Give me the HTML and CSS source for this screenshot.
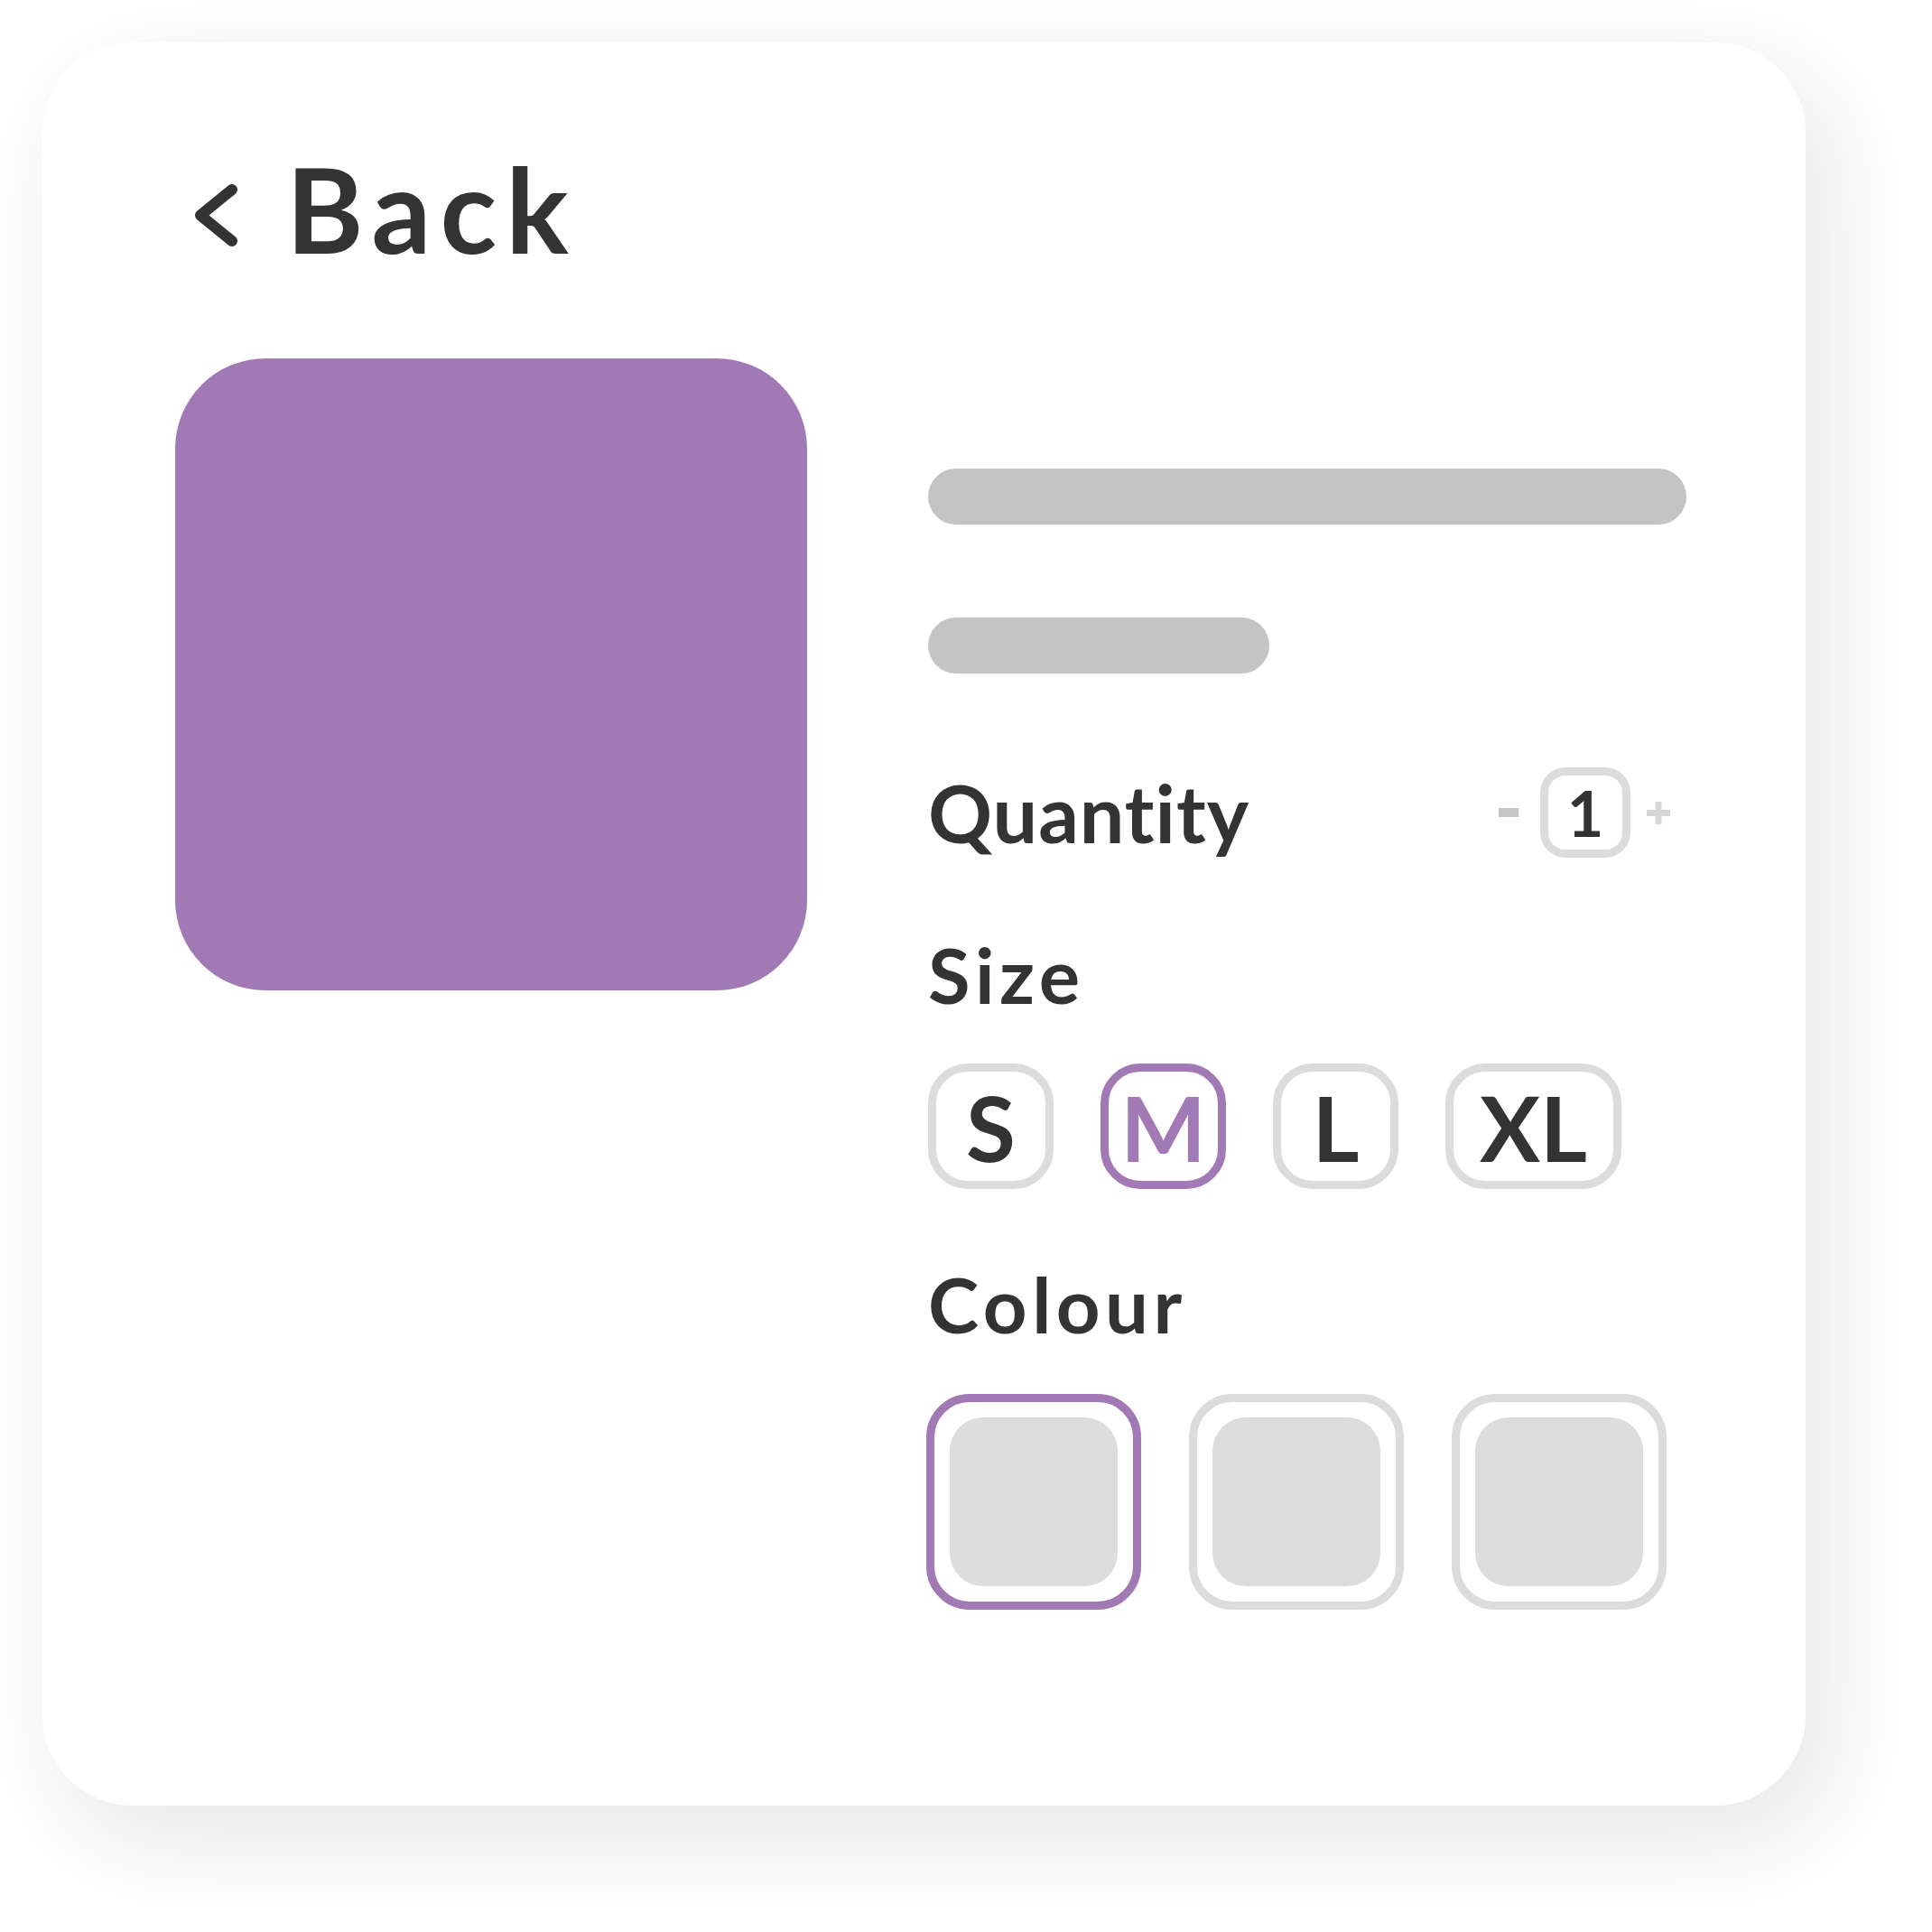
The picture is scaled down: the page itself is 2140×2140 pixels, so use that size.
FILE: index.html
```html
<!DOCTYPE html>
<html lang="en">

<head>
    <meta charset="UTF-8">
    <meta name="viewport" content="width=device-width, initial-scale=1.0">
    <title>Product</title>
    <link rel="stylesheet" href="styles.css">
</head>

<body>
    <div class="card">
        <a class="back" href="#">
            <svg class="back-icon" width="47" height="69" viewBox="0 0 47 69">
                <polyline points="41,6 6,34.5 41,63" fill="none" stroke="#333" stroke-width="12"
                    stroke-linecap="round" stroke-linejoin="round" />
            </svg>
            <span>Back</span>
        </a>

        <div class="product">
            <div class="product-image"></div>

            <div class="details">
                <div class="bar bar-title"></div>
                <div class="bar bar-price"></div>

                <div class="quantity-row">
                    <h2 class="label">Quantity</h2>
                    <div class="stepper">
                        <button class="step minus" type="button"><span></span></button>
                        <div class="qty">1</div>
                        <button class="step plus" type="button">
                            <svg width="26" height="25" viewBox="0 0 26 25">
                                <rect x="0" y="9" width="26" height="7" fill="#d6d6d6" />
                                <rect x="9.5" y="0" width="7" height="25" fill="#d6d6d6" />
                            </svg>
                        </button>
                    </div>
                </div>

                <h2 class="label label-size">Size</h2>
                <div class="sizes">
                    <button class="size" type="button">S</button>
                    <button class="size selected" type="button">M</button>
                    <button class="size" type="button">L</button>
                    <button class="size size-wide" type="button">XL</button>
                </div>

                <h2 class="label label-colour">Colour</h2>
                <div class="colours">
                    <button class="colour selected" type="button"><span></span></button>
                    <button class="colour" type="button"><span></span></button>
                    <button class="colour" type="button"><span></span></button>
                </div>
            </div>
        </div>
    </div>
</body>

</html>
```

FILE: styles.css
```css
body {
    margin: 0;
    padding: 47px;
    min-height: 100vh;
    box-sizing: border-box;
    background-color: #fff;
    font-family: Lato, "Open Sans", sans-serif;
    font-variant-ligatures: none;
    color: #333;
}

.card {
    width: 1953px;
    height: 1953px;
    box-sizing: border-box;
    padding: 119px 132px 0 147px;
    background-color: #fff;
    border-radius: 100px;
    box-shadow: 26px 36px 110px rgba(0, 0, 0, 0.1);
}

.back {
    display: flex;
    align-items: flex-start;
    margin-left: 22px;
    font-size: 130px;
    font-weight: bold;
    line-height: 1;
    letter-spacing: 10px;
    color: #333;
    text-decoration: none;
}

.back-icon {
    margin-top: 38px;
    margin-right: 54px;
}

.product {
    display: flex;
    align-items: flex-start;
    gap: 134px;
    margin-top: 101px;
}

.product-image {
    width: 700px;
    height: 700px;
    flex-shrink: 0;
    background-color: #a179b4;
    border-radius: 100px;
}

.details {
    width: 840px;
    flex-shrink: 0;
}

.bar {
    height: 62px;
    border-radius: 31px;
    background-color: #c4c4c4;
}

.bar-title {
    margin-top: 122px;
}

.bar-price {
    width: 378px;
    margin-top: 103px;
}

.label {
    margin: 0;
    font-size: 85px;
    font-weight: bold;
    line-height: 1;
    letter-spacing: 5.5px;
}

.quantity-row {
    display: flex;
    justify-content: space-between;
    align-items: center;
    margin-top: 104px;
    padding-right: 18px;
}

.quantity-row .label {
    font-size: 88px;
    letter-spacing: 1px;
}

.stepper {
    display: flex;
    align-items: center;
}

.step {
    display: flex;
    align-items: center;
    padding: 0;
    border: none;
    background: none;
    cursor: pointer;
}

.minus span {
    display: block;
    width: 22px;
    height: 10px;
    background-color: #c6c6c6;
}

.minus {
    margin-right: 24px;
}

.plus {
    margin-left: 18px;
}

.qty {
    width: 100px;
    height: 100px;
    box-sizing: border-box;
    display: flex;
    justify-content: center;
    align-items: center;
    border: 9px solid #dcdcdc;
    border-radius: 28px;
    font-size: 70px;
    font-weight: bold;
}

.label-size {
    margin-top: 87px;
}

.sizes {
    display: flex;
    gap: 52px;
    margin-top: 56px;
}

.size {
    width: 139px;
    height: 139px;
    box-sizing: border-box;
    padding: 0;
    border: 9px solid #dcdcdc;
    border-radius: 44px;
    background-color: #fff;
    font-family: Lato, "Open Sans", sans-serif;
    font-size: 100px;
    font-weight: bold;
    line-height: 1;
    color: #333;
    cursor: pointer;
}

.size-wide {
    width: 195px;
}

.size.selected {
    border-color: #a179b4;
    color: #a179b4;
}

.label-colour {
    margin-top: 85px;
}

.colours {
    display: flex;
    gap: 53px;
    margin-top: 57px;
    margin-left: -2px;
}

.colour {
    width: 238px;
    height: 239px;
    box-sizing: border-box;
    padding: 17px;
    border: 9px solid #dcdcdc;
    border-radius: 48px;
    background-color: #fff;
    cursor: pointer;
}

.colour span {
    display: block;
    width: 100%;
    height: 100%;
    border-radius: 37px;
    background-color: #ddd;
}

.colour.selected {
    border-color: #a179b4;
}
```
